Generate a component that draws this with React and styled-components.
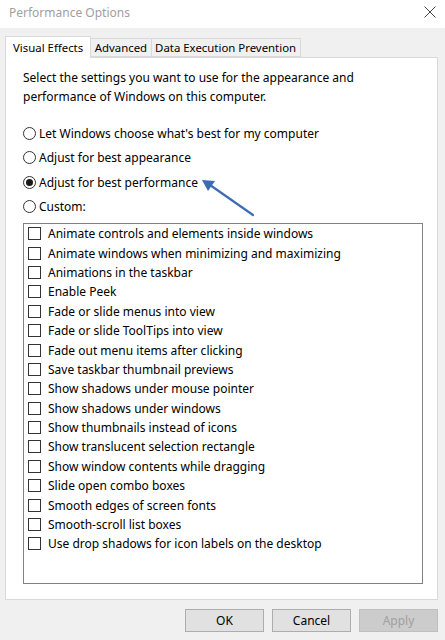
import React from "react";
import styled, { createGlobalStyle } from "styled-components";

const Global = createGlobalStyle`
  html, body { margin: 0; padding: 0; background: #f0f0f0; }
  body { font-family: "Noto Sans", "Open Sans", sans-serif; font-size: 12px; color: #000; }
`;

const Window = styled.div`
  position: relative;
  width: 445px;
  height: 640px;
  background: #f0f0f0;
  display: flex;
  flex-direction: column;
  overflow: hidden;
`;

const TitleBar = styled.div`
  height: 28px;
  background: #fff;
  display: flex;
  align-items: center;
  justify-content: space-between;
  padding: 0 9px 4px 9px;
  box-sizing: border-box;
`;

const Title = styled.span`
  color: #a0a0a0;
  font-size: 12px;
`;

const Body = styled.div`
  padding: 8px 7px 0 5px;
  display: flex;
  flex-direction: column;
`;

const TabStrip = styled.div`
  display: flex;
  align-items: flex-end;
  height: 21px;
  position: relative;
  z-index: 1;
`;

const Tab = styled.div`
  box-sizing: border-box;
  height: ${(p) => (p.$active ? "22px" : "19px")};
  padding: 0 ${(p) => (p.$active ? "7px" : "3.5px")};
  margin-bottom: ${(p) => (p.$active ? "-1px" : "0")};
  background: ${(p) => (p.$active ? "#fff" : "#f0f0f0")};
  border: 1px solid #d9d9d9;
  border-bottom: ${(p) => (p.$active ? "none" : "1px solid #d9d9d9")};
  margin-left: ${(p) => (p.$first ? "0" : "-1px")};
  display: flex;
  align-items: center;
  white-space: nowrap;
  font-size: 11.4px;
`;

const Panel = styled.div`
  box-sizing: border-box;
  height: 543px;
  background: #fff;
  border: 1px solid #d9d9d9;
  padding: 10px 0 0 17px;
  display: flex;
  flex-direction: column;
`;

const Description = styled.p`
  margin: 0;
  line-height: 19px;
  width: 360px;
`;

const RadioGroup = styled.div`
  margin-top: 15px;
  display: flex;
  flex-direction: column;
`;

const RadioRow = styled.label`
  height: 24.5px;
  display: flex;
  align-items: center;
  gap: 3px;
`;

const RadioCircle = styled.span`
  box-sizing: border-box;
  width: 13px;
  height: 13px;
  border-radius: 50%;
  border: 1px solid #333;
  background: #fff;
  display: flex;
  align-items: center;
  justify-content: center;
  &::after {
    content: "";
    width: 7px;
    height: 7px;
    border-radius: 50%;
    background: #1a1a1a;
    display: ${(p) => (p.$checked ? "block" : "none")};
  }
`;

const ListBox = styled.div`
  box-sizing: border-box;
  margin-top: 4px;
  width: 400px;
  height: 361px;
  border: 1px solid #828282;
  display: flex;
  flex-direction: column;
`;

const CheckRow = styled.label`
  height: 19.4px;
  display: flex;
  align-items: center;
  padding-left: 4px;
  gap: 7px;
  white-space: nowrap;
`;

const CheckBox = styled.span`
  box-sizing: border-box;
  width: 13px;
  height: 13px;
  border: 1px solid #333;
  background: #fff;
  flex: none;
`;

const ButtonRow = styled.div`
  margin-top: 9px;
  display: flex;
  justify-content: flex-end;
  gap: 8px;
`;

const Button = styled.button`
  box-sizing: border-box;
  width: 79px;
  height: 23px;
  font-family: inherit;
  font-size: 12px;
  padding: 0;
  background: ${(p) => (p.disabled ? "#cccccc" : "#e1e1e1")};
  border: 1px solid ${(p) => (p.disabled ? "#bfbfbf" : "#adadad")};
  color: ${(p) => (p.disabled ? "#a0a0a0" : "#000")};
`;

const Arrow = styled.svg`
  position: absolute;
  left: 0;
  top: 0;
  pointer-events: none;
`;

const items = [
  "Animate controls and elements inside windows",
  "Animate windows when minimizing and maximizing",
  "Animations in the taskbar",
  "Enable Peek",
  "Fade or slide menus into view",
  "Fade or slide ToolTips into view",
  "Fade out menu items after clicking",
  "Save taskbar thumbnail previews",
  "Show shadows under mouse pointer",
  "Show shadows under windows",
  "Show thumbnails instead of icons",
  "Show translucent selection rectangle",
  "Show window contents while dragging",
  "Slide open combo boxes",
  "Smooth edges of screen fonts",
  "Smooth-scroll list boxes",
  "Use drop shadows for icon labels on the desktop",
];

const radios = [
  { label: "Let Windows choose what's best for my computer" },
  { label: "Adjust for best appearance" },
  { label: "Adjust for best performance", checked: true },
  { label: "Custom:" },
];

export default function App() {
  return (
    <>
      <Global />
      <Window>
        <TitleBar>
          <Title>Performance Options</Title>
          <svg width="12" height="12" viewBox="0 0 12 12">
            <path d="M0.5 0.5 L11.5 11.5 M11.5 0.5 L0.5 11.5" stroke="#444" strokeWidth="1" />
          </svg>
        </TitleBar>
        <Body>
          <TabStrip>
            <Tab $active $first>Visual Effects</Tab>
            <Tab>Advanced</Tab>
            <Tab>Data Execution Prevention</Tab>
          </TabStrip>
          <Panel>
            <Description>
              Select the settings you want to use for the appearance and performance of Windows on this computer.
            </Description>
            <RadioGroup>
              {radios.map((r) => (
                <RadioRow key={r.label}>
                  <RadioCircle $checked={r.checked} />
                  {r.label}
                </RadioRow>
              ))}
            </RadioGroup>
            <ListBox>
              {items.map((t) => (
                <CheckRow key={t}>
                  <CheckBox />
                  {t}
                </CheckRow>
              ))}
            </ListBox>
          </Panel>
          <ButtonRow>
            <Button>OK</Button>
            <Button>Cancel</Button>
            <Button disabled>Apply</Button>
          </ButtonRow>
        </Body>
        <Arrow width="445" height="640" viewBox="0 0 445 640">
          <line x1="253" y1="215" x2="210" y2="185" stroke="#3d6cb3" strokeWidth="2.2" strokeLinecap="round" />
          <polygon points="202,180 215,181 208,191" fill="#3d6cb3" />
        </Arrow>
      </Window>
    </>
  );
}
